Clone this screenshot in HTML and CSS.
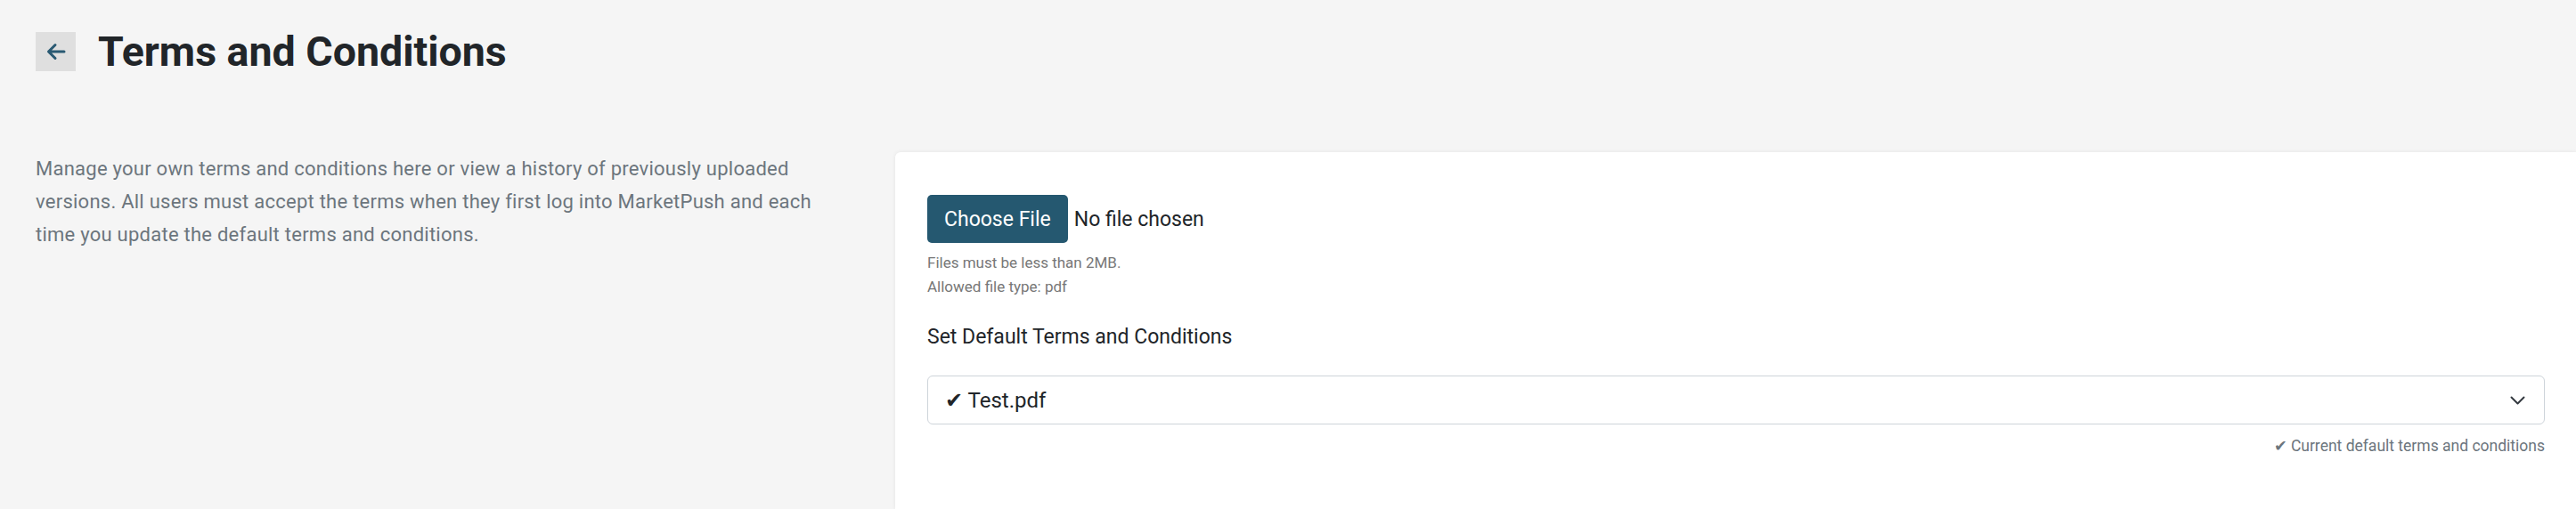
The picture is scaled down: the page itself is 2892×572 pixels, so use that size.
FILE: index.html
```html
<!DOCTYPE html>
<html lang="en">
<head>
<meta charset="utf-8">
<title>Terms and Conditions</title>
<link rel="stylesheet" href="styles.css">
</head>
<body>
<header class="header">
  <button class="back" type="button" aria-label="Back">
    <svg width="22" height="20" viewBox="0 0 22 20" fill="none" stroke="#2a5a73" stroke-width="3" stroke-linecap="round" stroke-linejoin="round"><path d="M20 10H3M10 2.5L2.5 10L10 17.5"/></svg>
  </button>
  <h1 class="title">Terms and Conditions</h1>
</header>
<main class="main">
  <p class="intro">Manage your own terms and conditions here or view a history of previously uploaded<br>versions. All users must accept the terms when they first log into MarketPush and each<br>time you update the default terms and conditions.</p>
  <section class="card">
    <div class="file-row">
      <label class="file-btn">Choose File<input class="file-input" type="file" accept="application/pdf"></label>
      <span class="file-status">No file chosen</span>
    </div>
    <div class="file-help">
      <div>Files must be less than 2MB.</div>
      <div>Allowed file type: pdf</div>
    </div>
    <label class="field-label" for="default-terms">Set Default Terms and Conditions</label>
    <div class="select-wrap">
      <select id="default-terms" class="select">
        <option>✔ Test.pdf</option>
      </select>
      <svg class="chevron" width="17" height="10" viewBox="0 0 17 10" fill="none" stroke="#343a40" stroke-width="2" stroke-linecap="round" stroke-linejoin="round"><path d="M1.5 1.5L8.5 8.5L15.5 1.5"/></svg>
    </div>
    <div class="hint">✔ Current default terms and conditions</div>
  </section>
</main>
</body>
</html>
```
FILE: styles.css
```css
* { box-sizing: border-box; }
html, body { height: 100%; }
body {
  margin: 0;
  background: #f5f5f5;
  font-family: Roboto, "Noto Sans", "DejaVu Sans", sans-serif;
  color: #212529;
  overflow: hidden;
}
.header {
  display: flex;
  align-items: center;
  gap: 25px;
  padding: 35px 0 0 40px;
}
.back {
  width: 45px;
  height: 44px;
  background: #dfdfdf;
  border: none;
  padding: 0;
  display: flex;
  align-items: center;
  justify-content: center;
  cursor: pointer;
}
.title {
  margin: 0;
  font-size: 46.5px;
  line-height: 46px;
  font-weight: 700;
  color: #212529;
}
.main {
  display: grid;
  grid-template-columns: 925px 1fr;
  column-gap: 40px;
  padding-left: 40px;
  margin-top: 90px;
}
.intro {
  margin: 0;
  font-size: 22px;
  letter-spacing: 0.25px;
  line-height: 37px;
  color: #6c757d;
}
.card {
  background: #fff;
  border-radius: 6px 0 0 0;
  box-shadow: 0 0 5px rgba(0, 0, 0, 0.07);
  padding: 48px 35px 40px 36px;
  min-height: 401px;
}
.file-row {
  display: flex;
  align-items: center;
  gap: 7px;
}
.file-btn {
  display: inline-flex;
  align-items: center;
  height: 54px;
  padding: 0 19px;
  background: #255870;
  color: #fff;
  font-size: 23px;
  border-radius: 5px;
  cursor: pointer;
}
.file-input { display: none; }
.file-status {
  font-size: 23px;
  color: #212529;
}
.file-help {
  margin-top: 9px;
  font-size: 17px;
  line-height: 27px;
  color: #777;
}
.field-label {
  display: block;
  margin-top: 28px;
  font-size: 23px;
  line-height: 30px;
  color: #212529;
}
.select-wrap {
  position: relative;
  margin-top: 28px;
}
.select {
  display: block;
  width: 100%;
  height: 55px;
  appearance: none;
  -webkit-appearance: none;
  background: #fff;
  border: 1px solid #ced4da;
  border-radius: 6px;
  padding: 0 60px 0 19px;
  font-family: inherit;
  font-size: 24px;
  color: #212529;
}
.chevron {
  position: absolute;
  right: 22px;
  top: 50%;
  margin-top: -5px;
  pointer-events: none;
}
.hint {
  margin-top: 12px;
  text-align: right;
  font-size: 17.5px;
  line-height: 24px;
  color: #6c757d;
}
```
